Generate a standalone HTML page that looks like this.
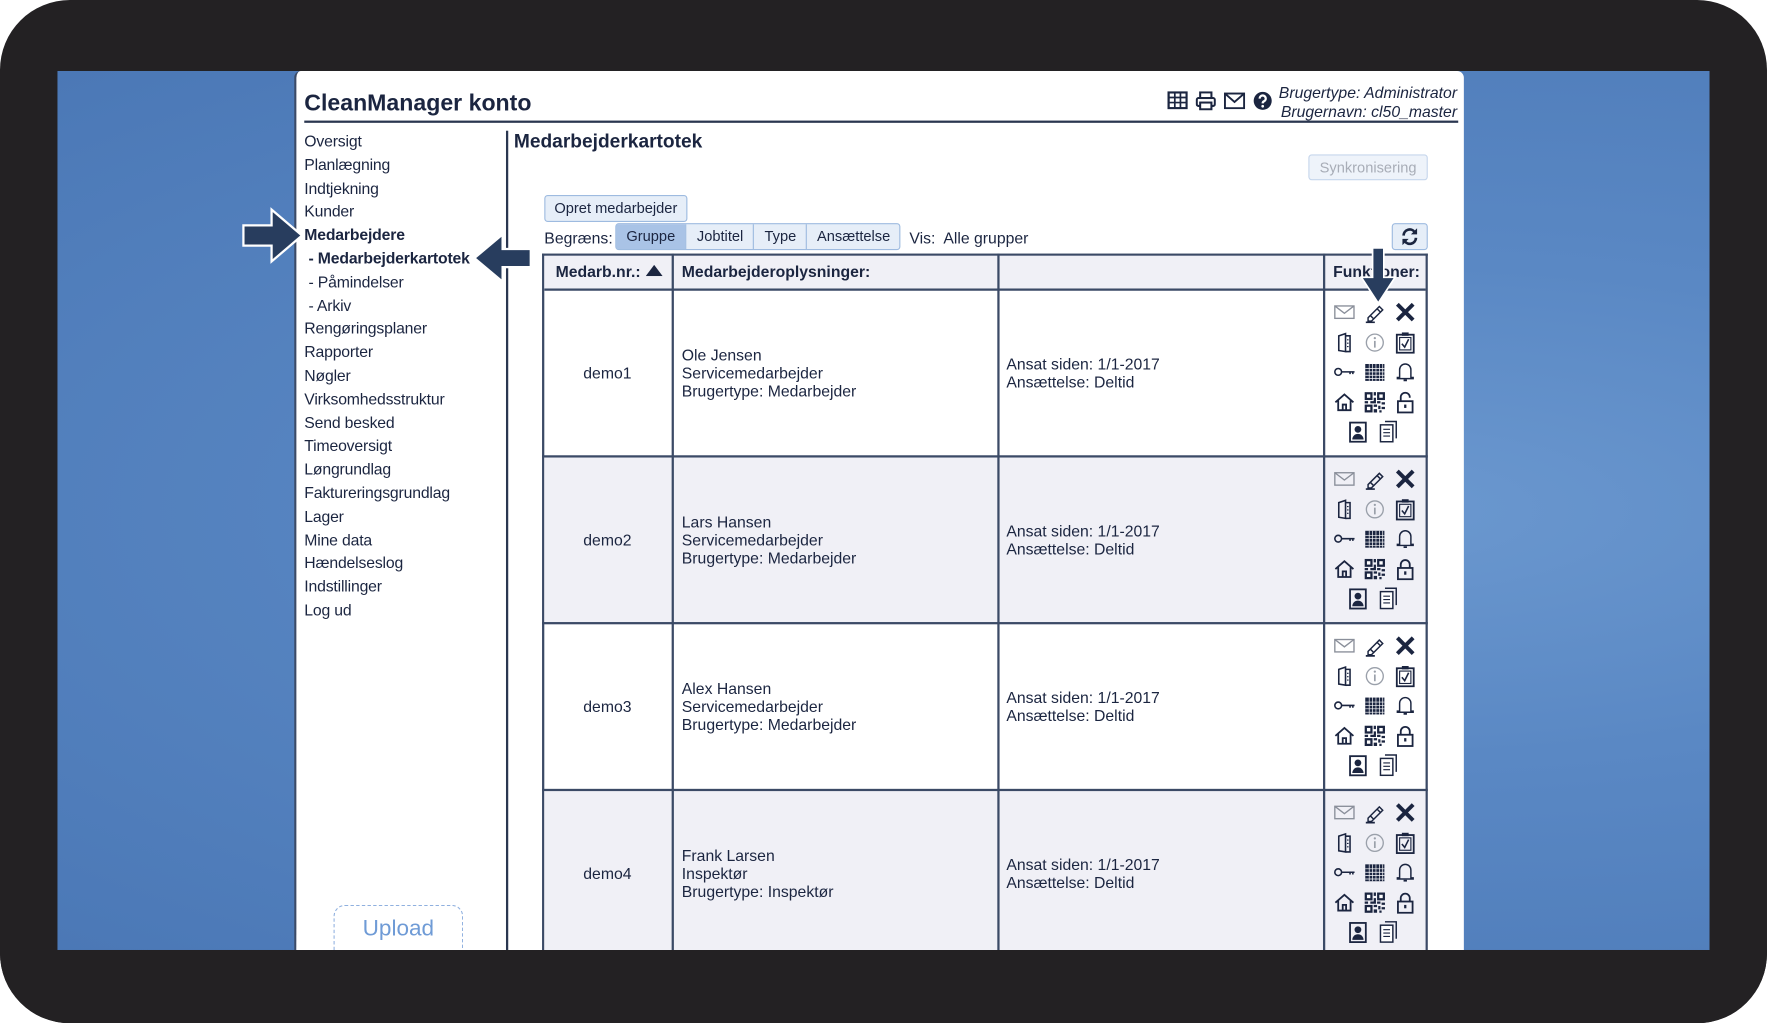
<!DOCTYPE html>
<html><head><meta charset="utf-8"><style>
html,body{margin:0;padding:0;background:#fff;overflow:hidden}
#w{width:1767px;height:1023px;overflow:hidden;position:relative}
#s{position:absolute;left:0;top:0;width:1568px;height:908px;transform:scale(1.12691);transform-origin:0 0;font-family:"Liberation Sans",sans-serif;color:#1b2540}
.a{position:absolute}
#frame{left:0;top:0;width:1568px;height:908px;background:#232123;border-radius:62px}
#blue{left:51px;top:63px;width:1466px;height:780px;background:radial-gradient(ellipse at 80% 50%,#6b98cf 0%,#5a88c4 40%,#4b78b6 100%)}
#panel{left:261px;top:63px;width:1038px;height:780px;background:#fff;border-left:2px solid #3b4a66;border-top-left-radius:6px;border-top-right-radius:6px;box-sizing:border-box}
.nav{left:270px;font-size:14px;line-height:16px;letter-spacing:-0.15px}
.btn{border:1px solid #9ebbe0;background:#e6eef8;border-radius:3px;font-size:13px;box-sizing:border-box;text-align:center}
.t{font-size:14px;line-height:16px}
.ic{position:absolute;width:20px;height:20px}
</style></head><body><div id="w"><div id="s">
<svg width="0" height="0" style="position:absolute">
<defs>
<symbol id="mail" viewBox="0 0 20 20"><rect x="1.5" y="4.5" width="17" height="11" fill="none" stroke="#8a8f9a" stroke-width="1.2"/><path d="M1.5 4.5L10 11L18.5 4.5" fill="none" stroke="#8a8f9a" stroke-width="1.2"/></symbol>
<symbol id="pen" viewBox="0 0 20 20"><path d="M4 15L14 5L17 8L7 18H4Z M12 7L15 10 M6 13l3 3" fill="none" stroke="#1b2540" stroke-width="1.3"/><path d="M2 19H10" stroke="#1b2540" stroke-width="1.5"/></symbol>
<symbol id="x" viewBox="0 0 20 20"><path d="M3 3L17 17M17 3L3 17" stroke="#1b2540" stroke-width="3.5"/></symbol>
<symbol id="door" viewBox="0 0 20 20"><path d="M5 4L11 2V18L5 17Z" fill="none" stroke="#1b2540" stroke-width="1.4"/><path d="M11 4H15V18H11M13 7v1M13 10v1M13 13v1" fill="none" stroke="#1b2540" stroke-width="1.4"/></symbol>
<symbol id="info" viewBox="0 0 20 20"><circle cx="10" cy="10" r="7.5" fill="none" stroke="#9aa0aa" stroke-width="1.2"/><path d="M10 8.5V14.5" stroke="#9aa0aa" stroke-width="1.5"/><circle cx="10" cy="6" r="1" fill="#9aa0aa"/></symbol>
<symbol id="clip" viewBox="0 0 20 20"><rect x="2.5" y="3" width="15" height="16" fill="none" stroke="#1b2540" stroke-width="1.6"/><rect x="5" y="5.5" width="10" height="11" fill="none" stroke="#1b2540" stroke-width="1"/><rect x="7" y="1" width="6" height="3" fill="#1b2540"/><path d="M7 11L9.5 14L13 7" fill="none" stroke="#1b2540" stroke-width="1.4"/></symbol>
<symbol id="key" viewBox="0 0 20 20"><circle cx="4.5" cy="10" r="3" fill="none" stroke="#1b2540" stroke-width="1.4"/><path d="M7.5 10H19M15 10v2M17.5 10v2" fill="none" stroke="#1b2540" stroke-width="1.4"/></symbol>
<symbol id="cal" viewBox="0 0 20 20"><rect x="1.5" y="3" width="17" height="15" fill="#1b2540"/><path d="M1.5 7H18.5M1.5 10H18.5M1.5 13H18.5M1.5 16H18.5M5 3V18M8 3V18M11 3V18M14 3V18M17 3V18" stroke="#fff" stroke-width=".6"/></symbol>
<symbol id="bell" viewBox="0 0 20 20"><path d="M5 15V8a5 5 0 0 1 10 0V15H17V16H3V15Z" fill="none" stroke="#1b2540" stroke-width="1.3"/><path d="M8.5 17.5h3" stroke="#1b2540" stroke-width="1.6"/></symbol>
<symbol id="home" viewBox="0 0 20 20"><path d="M2 10L10 3L18 10M4.5 8V17H15.5V8M8.5 17V12H11.5V17" fill="none" stroke="#1b2540" stroke-width="1.6"/></symbol>
<symbol id="qr" viewBox="0 0 20 20"><rect x="1" y="1" width="7" height="7" fill="#1b2540"/><rect x="3" y="3" width="3" height="3" fill="#fff"/><rect x="12" y="1" width="7" height="7" fill="#1b2540"/><rect x="14" y="3" width="3" height="3" fill="#fff"/><rect x="1" y="12" width="7" height="7" fill="#1b2540"/><rect x="3" y="14" width="3" height="3" fill="#fff"/><path d="M9 1h2v3H9zM9 6h2v3H9zM1 9h3v2H1zM6 9h5v2H6zM12 9h3v2h-3zM16 10h3v2h-3zM9 12h3v2H9zM13 13h2v3h-2zM16 14h3v2h-3zM9 16h3v3H9zM14 17h2v2h-2z" fill="#1b2540"/></symbol>
<symbol id="lock" viewBox="0 0 20 20"><rect x="3.5" y="9" width="13" height="10" fill="none" stroke="#1b2540" stroke-width="1.6"/><path d="M6 9V6a4 4 0 0 1 8 0V9" fill="none" stroke="#1b2540" stroke-width="1.6"/><rect x="9" y="12" width="2" height="3" fill="#1b2540"/></symbol>
<symbol id="ulock" viewBox="0 0 20 20"><rect x="3.5" y="9" width="13" height="10" fill="none" stroke="#1b2540" stroke-width="1.6"/><path d="M6 9V5.5a4 4 0 0 1 8 0V6" fill="none" stroke="#1b2540" stroke-width="1.6"/><rect x="9" y="12" width="2" height="3" fill="#1b2540"/></symbol>
<symbol id="card" viewBox="0 0 20 20"><rect x="3" y="2" width="14" height="17" fill="none" stroke="#1b2540" stroke-width="1.6"/><circle cx="10" cy="8" r="3" fill="#1b2540"/><path d="M5 17a5 5 0 0 1 10 0Z" fill="#1b2540"/></symbol>
<symbol id="docs" viewBox="0 0 20 20"><path d="M7 1H17V16" fill="none" stroke="#1b2540" stroke-width="1.3"/><rect x="3" y="4" width="11" height="15" fill="#fff" stroke="#1b2540" stroke-width="1.3"/><path d="M5.5 8h6M5.5 11h6M5.5 14h6" stroke="#1b2540" stroke-width="1"/></symbol>
</defs></svg>

<div class="a" id="frame"></div>
<div class="a" id="blue"></div>
<div class="a" id="panel"></div>

<div class="a" style="left:270px;top:80px;font-size:20.5px;font-weight:bold">CleanManager konto</div>
<div class="a" style="left:270px;top:107px;width:1024px;height:2px;background:#2a3650"></div>
<svg class="a" style="left:1036px;top:81px" width="18" height="16" viewBox="0 0 18 16"><rect x="1" y="1" width="16" height="14" fill="none" stroke="#1b2540" stroke-width="2"/><path d="M1 5.5H17M1 10H17M6.5 1V15M11.5 1V15" stroke="#1b2540" stroke-width="1.5"/></svg>
<svg class="a" style="left:1061px;top:81px" width="18" height="17" viewBox="0 0 18 17"><rect x="4" y="1" width="10" height="5" fill="none" stroke="#1b2540" stroke-width="1.8"/><rect x="1" y="6" width="16" height="7" rx="1.5" fill="none" stroke="#1b2540" stroke-width="1.8"/><rect x="4" y="10" width="10" height="6" fill="#fff" stroke="#1b2540" stroke-width="1.8"/></svg>
<svg class="a" style="left:1086px;top:82px" width="19" height="15" viewBox="0 0 19 15"><rect x="1" y="1" width="17" height="13" fill="none" stroke="#1b2540" stroke-width="1.7"/><path d="M1 1L9.5 8.5L18 1" fill="none" stroke="#1b2540" stroke-width="1.7"/></svg>
<svg class="a" style="left:1112px;top:81px" width="17" height="17" viewBox="0 0 17 17"><circle cx="8.5" cy="8.5" r="8" fill="#1b2540"/><path d="M5.8 6.5a2.7 2.7 0 1 1 3.8 2.4c-.8.4-1.1.8-1.1 1.8" fill="none" stroke="#fff" stroke-width="2"/><circle cx="8.5" cy="13.3" r="1.2" fill="#fff"/></svg>
<div class="a" style="right:275px;top:74px;font-size:14px;font-style:italic;text-align:right;line-height:17px">Brugertype: Administrator<br>Brugernavn: cl50_master</div>

<div class="a nav" style="top:115px;line-height:20.8px">Oversigt<br>Planlægning<br>Indtjekning<br>Kunder<br><b>Medarbejdere</b><br><b>&nbsp;- Medarbejderkartotek</b><br>&nbsp;- Påmindelser<br>&nbsp;- Arkiv<br>Rengøringsplaner<br>Rapporter<br>Nøgler<br>Virksomhedsstruktur<br>Send besked<br>Timeoversigt<br>Løngrundlag<br>Faktureringsgrundlag<br>Lager<br>Mine data<br>Hændelseslog<br>Indstillinger<br>Log ud</div>
<div class="a" style="left:449px;top:116px;width:2px;height:727px;background:#2a3650"></div>
<div class="a" style="left:296px;top:803px;width:115px;height:50px;border:1.5px dashed #8fb0df;border-radius:10px;box-sizing:border-box;color:#6f9bd6;font-size:20px;text-align:center;padding-top:9px">Upload</div>

<div class="a" style="left:456px;top:116px;font-size:17px;font-weight:bold">Medarbejderkartotek</div>
<div class="a btn" style="left:1161px;top:137px;width:106px;height:23px;line-height:21px;color:#a8adb7;background:#eef3fa;border-color:#c6d6ec">Synkronisering</div>
<div class="a btn" style="left:483px;top:173px;width:127px;height:24px;line-height:22px">Opret medarbejder</div>
<div class="a t" style="left:483px;top:203px">Begræns:</div>
<div class="a" style="left:546px;top:198px;width:253px;height:24px;border:1px solid #9ebbe0;border-radius:3px;background:#e6eef8;box-sizing:border-box;font-size:13px;line-height:22px">
<span class="a" style="left:0;width:61px;text-align:center;background:#a9c3e6;height:22px">Gruppe</span>
<span class="a" style="left:61px;width:60px;text-align:center;border-left:1px solid #9ebbe0;height:22px">Jobtitel</span>
<span class="a" style="left:121px;width:47px;text-align:center;border-left:1px solid #9ebbe0;height:22px">Type</span>
<span class="a" style="left:168px;width:83px;text-align:center;border-left:1px solid #9ebbe0;height:22px">Ansættelse</span></div>
<div class="a t" style="left:807px;top:203px">Vis:&nbsp; Alle grupper</div>
<div class="a btn" style="left:1235px;top:198px;width:32px;height:24px"><svg width="18" height="18" viewBox="0 0 18 18" style="margin-top:2px"><path d="M3.5 8A5.5 5.5 0 0 1 13.5 5M14.5 10A5.5 5.5 0 0 1 4.5 13" fill="none" stroke="#1b2540" stroke-width="2.4"/><path d="M15.5 1.5V7H10Z M2.5 16.5V11H8Z" fill="#1b2540"/></svg></div>

<div class="a" style="left:481px;top:225px;width:786px;height:625px;border:2px solid #3b4a66;border-bottom:none;box-sizing:border-box;background:#fff"></div>
<div class="a" style="left:483px;top:227px;width:782px;height:31px;background:#f0f0f6;border-bottom:2px solid #3b4a66;box-sizing:border-box"></div>
<div class="a" style="left:483px;top:406px;width:782px;height:147px;background:#f0f0f6"></div>
<div class="a" style="left:483px;top:701px;width:782px;height:150px;background:#f0f0f6"></div>
<div class="a" style="left:481px;top:404px;width:786px;height:2px;background:#3b4a66"></div>
<div class="a" style="left:481px;top:552px;width:786px;height:2px;background:#3b4a66"></div>
<div class="a" style="left:481px;top:700px;width:786px;height:2px;background:#3b4a66"></div>
<div class="a" style="left:596px;top:225px;width:2px;height:625px;background:#3b4a66"></div>
<div class="a" style="left:885px;top:225px;width:2px;height:625px;background:#3b4a66"></div>
<div class="a" style="left:1174px;top:225px;width:2px;height:625px;background:#3b4a66"></div>
<div class="a t" style="left:493px;top:233px;font-weight:bold">Medarb.nr.:</div>
<svg class="a" style="left:573px;top:235px" width="15" height="10" viewBox="0 0 15 10"><path d="M0 10L7.5 0L15 10Z" fill="#1b2540"/></svg>
<div class="a t" style="left:605px;top:233px;font-weight:bold">Medarbejderoplysninger:</div>
<div class="a t" style="left:1183px;top:233px;font-weight:bold">Funktioner:</div>

<div class="a t" style="left:481px;top:323px;width:116px;text-align:center">demo1</div>
<div class="a t" style="left:605px;top:307px">Ole Jensen<br>Servicemedarbejder<br>Brugertype: Medarbejder</div>
<div class="a t" style="left:893px;top:315px">Ansat siden: 1/1-2017<br>Ansættelse: Deltid</div>
<div class="a t" style="left:481px;top:471px;width:116px;text-align:center">demo2</div>
<div class="a t" style="left:605px;top:455px">Lars Hansen<br>Servicemedarbejder<br>Brugertype: Medarbejder</div>
<div class="a t" style="left:893px;top:463px">Ansat siden: 1/1-2017<br>Ansættelse: Deltid</div>
<div class="a t" style="left:481px;top:619px;width:116px;text-align:center">demo3</div>
<div class="a t" style="left:605px;top:603px">Alex Hansen<br>Servicemedarbejder<br>Brugertype: Medarbejder</div>
<div class="a t" style="left:893px;top:611px">Ansat siden: 1/1-2017<br>Ansættelse: Deltid</div>
<div class="a t" style="left:481px;top:767px;width:116px;text-align:center">demo4</div>
<div class="a t" style="left:605px;top:751px">Frank Larsen<br>Inspektør<br>Brugertype: Inspektør</div>
<div class="a t" style="left:893px;top:759px">Ansat siden: 1/1-2017<br>Ansættelse: Deltid</div>

<div class="a" style="left:1175px;top:258px">
<svg class="ic" style="left:8px;top:9px"><use href="#mail"/></svg><svg class="ic" style="left:35px;top:9px"><use href="#pen"/></svg><svg class="ic" style="left:62px;top:9px"><use href="#x"/></svg>
<svg class="ic" style="left:8px;top:36px"><use href="#door"/></svg><svg class="ic" style="left:35px;top:36px"><use href="#info"/></svg><svg class="ic" style="left:62px;top:36px"><use href="#clip"/></svg>
<svg class="ic" style="left:8px;top:62px"><use href="#key"/></svg><svg class="ic" style="left:35px;top:62px"><use href="#cal"/></svg><svg class="ic" style="left:62px;top:62px"><use href="#bell"/></svg>
<svg class="ic" style="left:8px;top:89px"><use href="#home"/></svg><svg class="ic" style="left:35px;top:89px"><use href="#qr"/></svg><svg class="ic" style="left:62px;top:89px"><use href="#ulock"/></svg>
<svg class="ic" style="left:20px;top:115px"><use href="#card"/></svg><svg class="ic" style="left:47px;top:115px"><use href="#docs"/></svg></div>
<div class="a" style="left:1175px;top:406px">
<svg class="ic" style="left:8px;top:9px"><use href="#mail"/></svg><svg class="ic" style="left:35px;top:9px"><use href="#pen"/></svg><svg class="ic" style="left:62px;top:9px"><use href="#x"/></svg>
<svg class="ic" style="left:8px;top:36px"><use href="#door"/></svg><svg class="ic" style="left:35px;top:36px"><use href="#info"/></svg><svg class="ic" style="left:62px;top:36px"><use href="#clip"/></svg>
<svg class="ic" style="left:8px;top:62px"><use href="#key"/></svg><svg class="ic" style="left:35px;top:62px"><use href="#cal"/></svg><svg class="ic" style="left:62px;top:62px"><use href="#bell"/></svg>
<svg class="ic" style="left:8px;top:89px"><use href="#home"/></svg><svg class="ic" style="left:35px;top:89px"><use href="#qr"/></svg><svg class="ic" style="left:62px;top:89px"><use href="#lock"/></svg>
<svg class="ic" style="left:20px;top:115px"><use href="#card"/></svg><svg class="ic" style="left:47px;top:115px"><use href="#docs"/></svg></div>
<div class="a" style="left:1175px;top:554px">
<svg class="ic" style="left:8px;top:9px"><use href="#mail"/></svg><svg class="ic" style="left:35px;top:9px"><use href="#pen"/></svg><svg class="ic" style="left:62px;top:9px"><use href="#x"/></svg>
<svg class="ic" style="left:8px;top:36px"><use href="#door"/></svg><svg class="ic" style="left:35px;top:36px"><use href="#info"/></svg><svg class="ic" style="left:62px;top:36px"><use href="#clip"/></svg>
<svg class="ic" style="left:8px;top:62px"><use href="#key"/></svg><svg class="ic" style="left:35px;top:62px"><use href="#cal"/></svg><svg class="ic" style="left:62px;top:62px"><use href="#bell"/></svg>
<svg class="ic" style="left:8px;top:89px"><use href="#home"/></svg><svg class="ic" style="left:35px;top:89px"><use href="#qr"/></svg><svg class="ic" style="left:62px;top:89px"><use href="#lock"/></svg>
<svg class="ic" style="left:20px;top:115px"><use href="#card"/></svg><svg class="ic" style="left:47px;top:115px"><use href="#docs"/></svg></div>
<div class="a" style="left:1175px;top:702px">
<svg class="ic" style="left:8px;top:9px"><use href="#mail"/></svg><svg class="ic" style="left:35px;top:9px"><use href="#pen"/></svg><svg class="ic" style="left:62px;top:9px"><use href="#x"/></svg>
<svg class="ic" style="left:8px;top:36px"><use href="#door"/></svg><svg class="ic" style="left:35px;top:36px"><use href="#info"/></svg><svg class="ic" style="left:62px;top:36px"><use href="#clip"/></svg>
<svg class="ic" style="left:8px;top:62px"><use href="#key"/></svg><svg class="ic" style="left:35px;top:62px"><use href="#cal"/></svg><svg class="ic" style="left:62px;top:62px"><use href="#bell"/></svg>
<svg class="ic" style="left:8px;top:89px"><use href="#home"/></svg><svg class="ic" style="left:35px;top:89px"><use href="#qr"/></svg><svg class="ic" style="left:62px;top:89px"><use href="#lock"/></svg>
<svg class="ic" style="left:20px;top:115px"><use href="#card"/></svg><svg class="ic" style="left:47px;top:115px"><use href="#docs"/></svg></div>

<div class="a" style="left:0;top:843px;width:1568px;height:65px;background:#232123;border-bottom-left-radius:62px;border-bottom-right-radius:62px"></div>

<svg class="a" style="left:213px;top:183px" width="58" height="52" viewBox="0 0 58 52"><path d="M3 17H28V3L55 26L28 49V35H3Z" fill="#283d5e" stroke="#fff" stroke-width="2"/></svg>
<svg class="a" style="left:418px;top:205px" width="56" height="48" viewBox="0 0 56 48"><path d="M53 16H28V3L3 24L28 45V32H53Z" fill="#283d5e" stroke="#fff" stroke-width="2"/></svg>
<svg class="a" style="left:1206px;top:218px" width="34" height="54" viewBox="0 0 34 54"><path d="M12 2H22V28H32L17 51L2 28H12Z" fill="#283d5e" stroke="#fff" stroke-width="1.5"/></svg>
</div></div></body></html>
